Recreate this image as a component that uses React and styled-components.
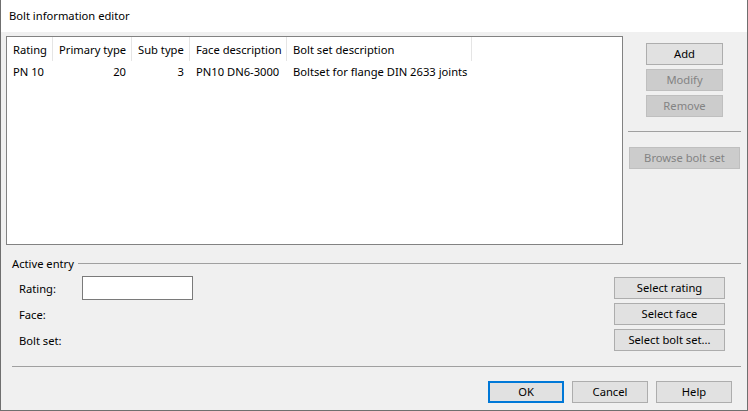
import React from 'react';
import styled, { createGlobalStyle } from 'styled-components';

const GlobalStyle = createGlobalStyle`
    html, body {
        margin: 0;
        padding: 0;
        background: #f0f0f0;
    }
    * {
        box-sizing: border-box;
    }
`

const Window = styled('div')`
    width: 748px;
    height: 411px;
    display: flex;
    flex-direction: column;
    background: #f0f0f0;
    border: 1px solid #6f6f6f;
    border-top: none;
    font-family: "Segoe UI", "Noto Sans", "Liberation Sans", sans-serif;
    font-size: 11.2px;
    color: #000;
`

const TitleBar = styled('div')`
    height: 32px;
    flex: none;
    background: #fff;
    display: flex;
    align-items: center;
    padding: 0 0 1px 8px;
`

const Body = styled('div')`
    flex: 1;
    display: flex;
    flex-direction: column;
    padding: 4px 6px 0 5px;
`

const TopArea = styled('div')`
    display: flex;
    gap: 5px;
`

const ListBox = styled('div')`
    width: 617px;
    height: 209px;
    background: #fff;
    border: 1px solid #828282;
`

const Row = styled('div')`
    display: flex;
    height: ${p => p.$header ? 24 : 20}px;
    align-items: center;
`

const Cell = styled('div')`
    width: ${p => p.$w}px;
    flex: none;
    height: 100%;
    display: flex;
    align-items: center;
    justify-content: ${p => p.$right ? 'flex-end' : 'flex-start'};
    padding: ${p => p.$right ? '0 5px 0 0' : '0 0 0 6px'};
    border-right: ${p => p.$header ? '1px solid #e5e5e5' : '1px solid transparent'};
    white-space: nowrap;
`

const SideColumn = styled('div')`
    width: 113px;
    display: flex;
    flex-direction: column;
    align-items: center;
    padding-top: 7px;
    gap: 4px;
`

const Separator = styled('div')`
    height: 1px;
    background: #a0a0a0;
    align-self: stretch;
    margin: ${p => p.$margin || '0'};
`

const Button = styled('button')`
    width: ${p => p.$w || 76}px;
    height: 22px;
    flex: none;
    font: inherit;
    color: ${p => p.disabled ? '#838383' : '#000'};
    background: ${p => p.disabled ? '#cccccc' : '#e1e1e1'};
    border: ${p => p.$default ? '2px solid #0078d7' : p.disabled ? '1px solid #bfbfbf' : '1px solid #adadad'};
    padding: 0 0 1px;
    margin: 0;
    line-height: 1;
`

const Group = styled('div')`
    margin-top: 10px;
    display: flex;
    flex-direction: column;
`

const GroupHeader = styled('div')`
    height: 16px;
    display: flex;
    align-items: center;
    gap: 4px;
    padding-left: 6px;
    margin-bottom: 4px;
    &::after {
        content: '';
        flex: 1;
        height: 1px;
        background: #a0a0a0;
        margin-top: 1px;
    }
`

const FieldRow = styled('div')`
    height: 26px;
    display: flex;
    align-items: center;
    padding: 0 16px 0 13px;
`

const Label = styled('span')`
    width: 63px;
    flex: none;
`

const Input = styled('input')`
    width: 111px;
    height: 24px;
    border: 1px solid #7a7a7a;
    background: #fff;
    margin: 0;
    font: inherit;
`

const Spacer = styled('div')`
    flex: 1;
`

const Footer = styled('div')`
    display: flex;
    justify-content: flex-end;
    gap: 8px;
    padding-right: 9px;
`

const columns = [
    { title: 'Rating', w: 46 },
    { title: 'Primary type', w: 79, right: true },
    { title: 'Sub type', w: 58, right: true },
    { title: 'Face description', w: 97 },
    { title: 'Bolt set description', w: 185 },
]

const entries = [
    ['PN 10', '20', '3', 'PN10 DN6-3000', 'Boltset for flange DIN 2633 joints'],
]

const App = () => {
    return (
        <>
            <GlobalStyle />
            <Window>
                <TitleBar>Bolt information editor</TitleBar>
                <Body>
                    <TopArea>
                        <ListBox>
                            <Row $header>
                                {columns.map(c => (
                                    <Cell key={c.title} $w={c.w} $header>{c.title}</Cell>
                                ))}
                            </Row>
                            {entries.map((e, i) => (
                                <Row key={i}>
                                    {e.map((v, j) => (
                                        <Cell key={j} $w={columns[j].w} $right={columns[j].right}>{v}</Cell>
                                    ))}
                                </Row>
                            ))}
                        </ListBox>
                        <SideColumn>
                            <Button $w={77}>Add</Button>
                            <Button $w={77} disabled>Modify</Button>
                            <Button $w={77} disabled>Remove</Button>
                            <Separator $margin="10px 0 11px" />
                            <Button $w={111} disabled>Browse bolt set</Button>
                        </SideColumn>
                    </TopArea>
                    <Group>
                        <GroupHeader>Active entry</GroupHeader>
                        <FieldRow>
                            <Label>Rating:</Label>
                            <Input type="text" />
                            <Spacer />
                            <Button $w={111}>Select rating</Button>
                        </FieldRow>
                        <FieldRow>
                            <Label>Face:</Label>
                            <Spacer />
                            <Button $w={111}>Select face</Button>
                        </FieldRow>
                        <FieldRow>
                            <Label>Bolt set:</Label>
                            <Spacer />
                            <Button $w={111}>Select bolt set...</Button>
                        </FieldRow>
                    </Group>
                    <Separator $margin="13px 0 14px 6px" />
                    <Footer>
                        <Button $default>OK</Button>
                        <Button>Cancel</Button>
                        <Button>Help</Button>
                    </Footer>
                </Body>
            </Window>
        </>
    )
}

export default App
